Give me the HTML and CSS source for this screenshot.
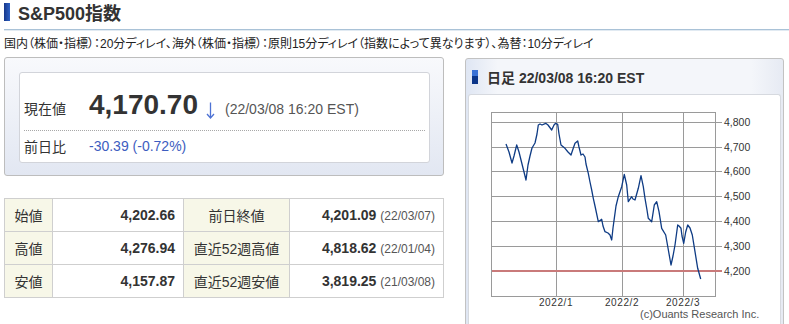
FILE: index.html
```html
<!DOCTYPE html>
<html lang="ja">
<head>
    <meta charset="UTF-8">
    <title>S&amp;P500指数</title>
    <link rel="stylesheet" href="styles.css">
</head>
<body>
    <div class="page">
        <h1 class="page-title"><span class="mark"></span>S&amp;P500指数</h1>
        <p class="note">国内（株価・指標）：20分ディレイ、海外（株価・指標）：原則15分ディレイ（指数によって異なります）、為替：10分ディレイ</p>

        <div class="main">
            <div class="left">
                <div class="price-panel">
                    <div class="price-box">
                        <div class="price-row">
                            <span class="label">現在値</span>
                            <span class="price">4,170.70</span>
                            <svg class="arrow" width="9" height="17" viewBox="0 0 9 17">
                                <path d="M4.5 0.5 V15.5 M1 12 L4.5 16 L8 12" fill="none" stroke="#4d72d4" stroke-width="1.3"/>
                            </svg>
                            <span class="stamp">(22/03/08 16:20 EST)</span>
                        </div>
                        <div class="change-row">
                            <span class="label">前日比</span>
                            <span class="change">-30.39 (-0.72%)</span>
                        </div>
                    </div>
                </div>

                <table class="stats">
                    <tr>
                        <th>始値</th>
                        <td class="num">4,202.66</td>
                        <th>前日終値</th>
                        <td class="num">4,201.09 <span class="date">(22/03/07)</span></td>
                    </tr>
                    <tr>
                        <th>高値</th>
                        <td class="num">4,276.94</td>
                        <th>直近52週高値</th>
                        <td class="num">4,818.62 <span class="date">(22/01/04)</span></td>
                    </tr>
                    <tr>
                        <th>安値</th>
                        <td class="num">4,157.87</td>
                        <th>直近52週安値</th>
                        <td class="num">3,819.25 <span class="date">(21/03/08)</span></td>
                    </tr>
                </table>
            </div>

            <div class="chart-panel">
                <div class="chart-head"><span class="mark small"></span>日足 22/03/08 16:20 EST</div>
                <div class="chart-box">
                    <svg class="chart" width="310" height="228" viewBox="1 1 310 228">
                        <!-- grid -->
                        <g stroke="#9a9a9a" stroke-width="1" fill="none">
                            <rect x="23.5" y="18.5" width="224" height="184"/>
                            <line x1="88.5" y1="18" x2="88.5" y2="203"/>
                            <line x1="154.5" y1="18" x2="154.5" y2="203"/>
                            <line x1="215.5" y1="18" x2="215.5" y2="203"/>
                            <line x1="23" y1="28.5" x2="254" y2="28.5"/>
                            <line x1="23" y1="53.5" x2="254" y2="53.5"/>
                            <line x1="23" y1="77.5" x2="254" y2="77.5"/>
                            <line x1="23" y1="102.5" x2="254" y2="102.5"/>
                            <line x1="23" y1="127.5" x2="254" y2="127.5"/>
                            <line x1="23" y1="152.5" x2="254" y2="152.5"/>
                        </g>
                        <line x1="24" y1="177" x2="254" y2="177" stroke="#c97a7a" stroke-width="2"/>

                        <polyline fill="none" stroke="#0e3b84" stroke-width="1.3" stroke-linejoin="round"
                            points="38,50 41,58 44,69 46,62 48.7,51 51,58 54,70 58,86 60,71 62,62 64,54 67,49 69,40 70.3,31 72,30 74,31 77.7,29.3 80,31 83.7,36 86,31 87.7,29.3 89.7,30.3 91,40 93,51 97,54.3 100,58 103,61 105,55 107,49.3 109.7,47 111,53 113,61 115,60 117,63 118,70 120.3,79.3 122,88 123.7,96 125.3,104.3 127,112 130.3,127.7 133.7,125.3 135,132 137,137.7 140,139 142,141 143.7,146 145,134 146.3,124.3 148,112 150.3,102.7 153.7,92.7 156.3,80.3 158.7,91 160.3,107.7 163.7,102.7 165,105 167,106 170.3,94.3 173,81.7 175.3,92.7 177,104.3 179,116 180.3,124.3 183.7,127.7 186.3,111 188.7,107.7 191,117.7 193.7,134.3 197.7,141 200,154 203,171 205,162 207,151 209.7,131 211,132 213,134.3 214,142 215.7,149.3 217.7,138 219.7,131 222,134 224.3,141 227,157.7 229.7,174.3 232.7,185"/>

                        <g class="ylab">
                            <text x="256" y="32">4,800</text>
                            <text x="256" y="57">4,700</text>
                            <text x="256" y="81">4,600</text>
                            <text x="256" y="106">4,500</text>
                            <text x="256" y="131">4,400</text>
                            <text x="256" y="156">4,300</text>
                            <text x="256" y="181">4,200</text>
                        </g>
                        <g class="xlab">
                            <text x="88" y="212">2022/1</text>
                            <text x="154" y="212">2022/2</text>
                            <text x="215" y="212">2022/3</text>
                        </g>
                        <text class="credit" x="172" y="224">(c)Ouants Research Inc.</text>
                    </svg>
                </div>
            </div>
        </div>
    </div>
</body>
</html>
```

FILE: styles.css
```css
body {
    margin: 0;
    font-family: "Liberation Sans", "Noto Sans CJK JP", sans-serif;
    color: #333;
    background-color: #fff;
}

.page {
    height: 324px;
    padding-left: 4px;
    overflow: hidden;
}

.page-title {
    display: flex;
    align-items: center;
    gap: 8px;
    height: 23px;
    margin: 0;
    padding-bottom: 6px;
    font-size: 18px;
    font-weight: bold;
    color: #333;
    border-bottom: 1px solid #a9c2d7;
    box-shadow: 0 1px 0 #e1eaf2;
}

.mark {
    display: inline-block;
    width: 6px;
    height: 18px;
    background: linear-gradient(to right, #16378a, #2f62c6);
}

.mark.small {
    height: 14px;
    background: linear-gradient(#3a72d6 0 45%, #0b3589 45%);
}

.note {
    margin: 6px 0 0;
    font-size: 12px;
    line-height: 16px;
    font-feature-settings: "palt";
    color: #222;
}

.main {
    display: flex;
    align-items: flex-start;
    margin-top: 5px;
}

.left {
    width: 440px;
}

.price-panel {
    height: 119px;
    box-sizing: border-box;
    padding: 14px 13px 0 14px;
    border: 1px solid #bdbdbd;
    border-radius: 3px;
    background: linear-gradient(#f8f9fc, #e2e7f2);
}

.price-box {
    height: 91px;
    box-sizing: border-box;
    background-color: #fff;
    border: 1px solid #d2d4da;
    border-radius: 3px;
}

.price-row {
    display: flex;
    align-items: baseline;
    height: 58px;
    box-sizing: border-box;
    padding-top: 18px;
    margin: 0 4px;
    border-bottom: 1px dotted #a8a8a8;
}

.label {
    width: 65px;
    font-size: 14px;
}

.price {
    font-size: 28px;
    line-height: 28px;
    font-weight: bold;
    color: #333;
}

.arrow {
    align-self: center;
    margin-left: 8px;
}

.stamp {
    margin-left: 10px;
    font-size: 14px;
    color: #555;
}

.change-row {
    display: flex;
    align-items: center;
    height: 30px;
    padding-left: 4px;
}

.change {
    font-size: 14px;
    color: #3d5dc0;
}

.stats {
    width: 440px;
    margin-top: 22px;
    border-collapse: collapse;
    font-size: 14px;
}

.stats th,
.stats td {
    height: 32px;
    padding: 0 8px;
    border: 1px solid #cfcfcf;
}

.stats th {
    font-weight: normal;
    background-color: #f7f7e8;
    text-align: center;
}

.stats tr th:first-child {
    width: 31px;
}

.stats tr td:nth-child(2) {
    width: 114px;
}

.stats tr th:nth-child(3) {
    width: 89px;
}

.stats .num {
    text-align: right;
    font-weight: bold;
}

.stats .date {
    font-size: 12px;
    font-weight: normal;
    color: #555;
}

.chart-panel {
    width: 319px;
    height: 280px;
    box-sizing: border-box;
    margin: 1px 0 0 21px;
    padding: 0 2px;
    border: 1px solid #c2c2c2;
    border-radius: 3px;
    background: linear-gradient(to right, #dfe6f3, #f4f6fa 10%, #f4f6fa 90%, #e6eaf3);
}

.chart-head {
    display: flex;
    align-items: center;
    gap: 9px;
    height: 35px;
    padding-left: 4px;
    font-size: 14px;
    font-weight: bold;
    color: #333;
}

.chart-box {
    height: 240px;
    background-color: #fff;
    border: 1px solid #d6d9df;
    border-bottom: 0;
    border-radius: 3px 3px 0 0;
}

.chart {
    display: block;
}

.ylab text {
    font-size: 10.5px;
    fill: #333;
}

.xlab text {
    font-size: 10px;
    fill: #333;
    text-anchor: middle;
    letter-spacing: 0.6px;
}

.credit {
    font-size: 11px;
    fill: #555;
}
```
